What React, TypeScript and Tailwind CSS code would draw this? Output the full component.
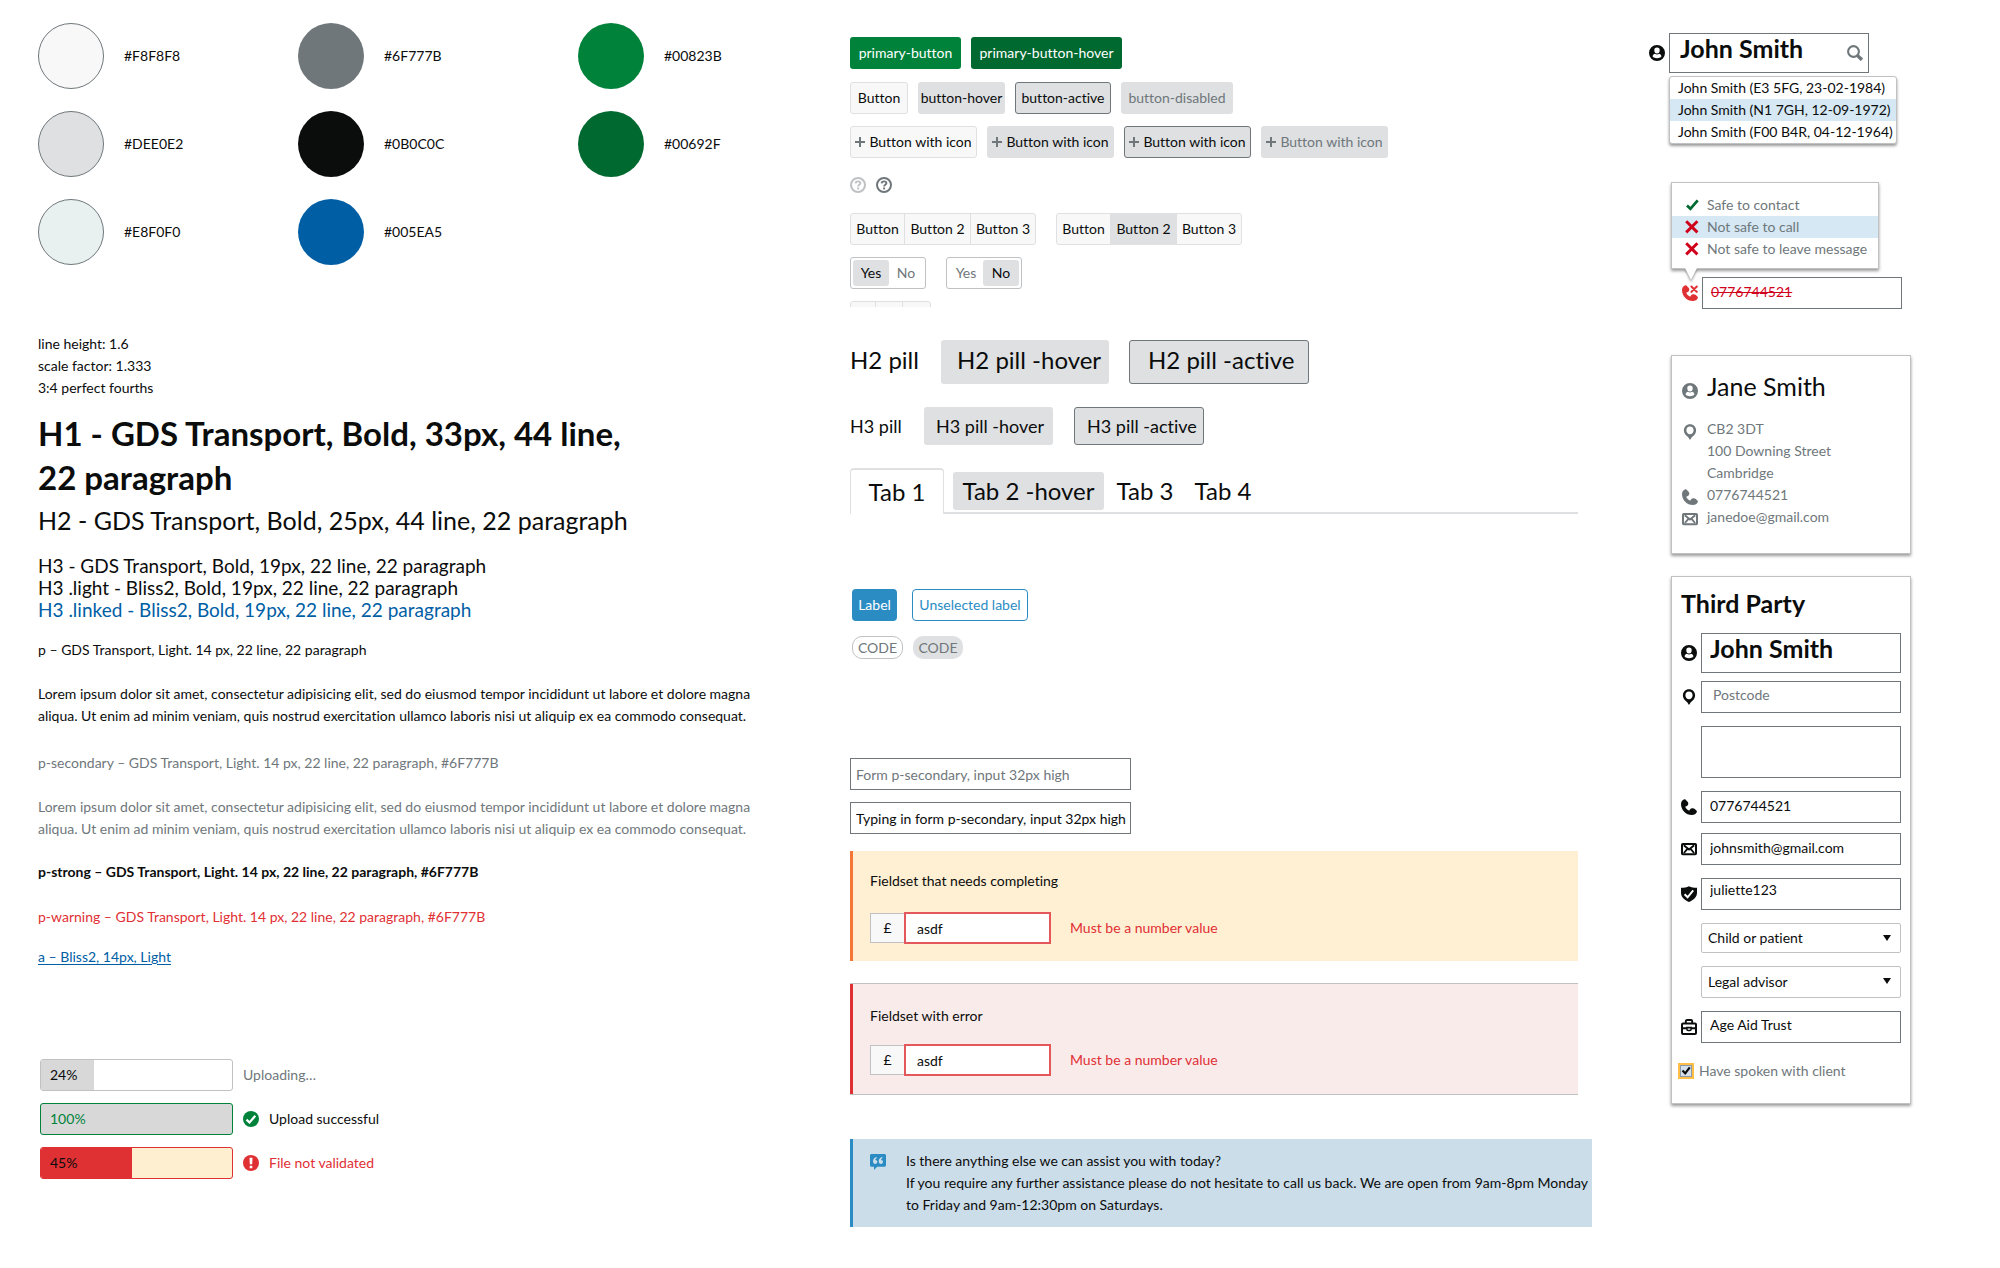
import type { ReactNode } from "react";

type IconProps = { className?: string };

const UserIcon = ({ className = "" }: IconProps) => (
  <svg viewBox="0 0 16 16" aria-hidden="true" className={`size-4 shrink-0 ${className}`}>
    <path
      fill="currentColor"
      fillRule="evenodd"
      d="M8 0a8 8 0 1 0 0 16A8 8 0 0 0 8 0Zm0 2.600a2.700 2.700 0 0 1 2.700 2.800c0 1.800-1.200 3.100-2.700 3.100S5.300 7.200 5.300 5.400A2.700 2.700 0 0 1 8 2.600ZM3.600 11.300c0-1.300 1-2.300 2.400-2.600.6.500 1.200.8 2 .8s1.400-.3 2-.8c1.400.3 2.400 1.300 2.400 2.600 0 1.100-2 1.900-4.400 1.900s-4.400-.8-4.400-1.900Z"
    />
  </svg>
);

const PinIcon = ({ className = "" }: IconProps) => (
  <svg viewBox="0 0 16 16" aria-hidden="true" className={`size-4 shrink-0 ${className}`}>
    <path
      fill="currentColor"
      fillRule="evenodd"
      d="M8 .2c3.500 0 6.100 2.700 6.100 6 0 2-.8 3.700-2.100 5L9.800 13.300 8 15.900l-1.800-2.600L4 11.200c-1.300-1.300-2.100-3-2.100-5C1.900 2.900 4.500.2 8 .2Zm0 2.300C5.700 2.500 4.400 4.100 4.400 6.200c0 2.200 1.400 4.100 3.600 4.100s3.600-1.900 3.600-4.100C11.600 4.100 10.300 2.500 8 2.500Z"
    />
  </svg>
);

const phonePath =
  "M3.400.3C1.300 1 0 2.700 0 5.200c0 5.700 5 10.800 10.800 10.800 2.500 0 4.300-1.200 5.100-3.300.1-.4 0-.7-.3-1l-2.100-1.900c-.8-.7-2.200-.8-3.200-.3-1 .4-1.700 1.200-2 2.300C6.500 11 5 9.500 4.200 7.700c1.400-.2 2.500-1 2.900-2.100.4-1 .2-2-.5-2.800L4.400.5C4.100.2 3.800.2 3.400.3Z";

const PhoneIcon = ({ className = "" }: IconProps) => (
  <svg viewBox="0 0 16 16" aria-hidden="true" className={`size-4 shrink-0 ${className}`}>
    <path fill="currentColor" d={phonePath} />
  </svg>
);

const PhoneBlockedIcon = () => (
  <svg viewBox="0 0 16 16" aria-hidden="true" className="size-4 shrink-0 text-[#df3034]">
    <path fill="currentColor" d={phonePath} />
    <path stroke="currentColor" strokeWidth="2" strokeLinecap="round" d="m9.400 1.500 5.400 5.400m0-5.400L9.400 6.900" />
  </svg>
);

const MailIcon = ({ className = "" }: IconProps) => (
  <svg viewBox="0 0 16 16" aria-hidden="true" fill="none" stroke="currentColor" className={`size-4 shrink-0 ${className}`}>
    <rect x="1" y="3" width="14" height="10.300" rx="0.800" strokeWidth="2" />
    <path strokeWidth="1.900" d="m2.800 4.300 5.200 4.300 5.200-4.300M2.900 12l3.300-3.800M13.100 12 9.800 8.200" />
  </svg>
);

const ShieldIcon = ({ className = "" }: IconProps) => (
  <svg viewBox="0 0 16 16" aria-hidden="true" className={`size-4 shrink-0 ${className}`}>
    <path fill="currentColor" d="M8 .2c2.200 1 4.800 1.500 8 1.500v5.100c0 4.200-3.300 7.400-8 9.100-4.700-1.700-8-4.900-8-9.100V1.700C3.200 1.700 5.800 1.200 8 .2Z" />
    <path fill="none" stroke="#fff" strokeWidth="2" d="m3.600 8.300 3 3 5.600-7" />
  </svg>
);

const BriefcaseIcon = ({ className = "" }: IconProps) => (
  <svg viewBox="0 0 16 16" aria-hidden="true" fill="none" stroke="currentColor" className={`size-4 shrink-0 ${className}`}>
    <rect x="1" y="4.500" width="14" height="10.500" rx="1" strokeWidth="2" />
    <path strokeWidth="1.900" d="M4.800 4V2.200c0-.7.5-1.200 1.200-1.200h4c.7 0 1.200.5 1.200 1.200V4M1 9.200h4.800m4.400 0H15" />
    <path strokeWidth="1.600" d="M5.900 8.600v1.600c0 .8.6 1.300 1.300 1.300h1.600c.7 0 1.300-.5 1.300-1.300V8.600Z" />
  </svg>
);

const SearchIcon = ({ className = "" }: IconProps) => (
  <svg viewBox="0 0 16 16" aria-hidden="true" fill="none" stroke="currentColor" className={`size-4 shrink-0 ${className}`}>
    <circle cx="6.500" cy="6.500" r="5.400" strokeWidth="2.100" />
    <path strokeWidth="3.400" d="m10.600 10.600 4.300 4.300" />
  </svg>
);

const TickIcon = ({ className = "" }: IconProps) => (
  <svg viewBox="0 0 14 14" aria-hidden="true" fill="none" stroke="currentColor" className={`size-3.5 shrink-0 ${className}`}>
    <path strokeWidth="2.700" d="m2 7.500 3.400 3.300L12.700 2.300" />
  </svg>
);

const CrossIcon = ({ className = "" }: IconProps) => (
  <svg viewBox="0 0 14 14" aria-hidden="true" stroke="currentColor" className={`size-3.5 shrink-0 ${className}`}>
    <path strokeWidth="2.900" d="m1.200 1.200 11.200 11.200m0-11.200L1.200 12.400" />
  </svg>
);

const PlusIcon = () => (
  <svg viewBox="0 0 10 10" aria-hidden="true" className="size-2.5 shrink-0 text-[#6f777b]">
    <path stroke="currentColor" strokeWidth="2" d="M5 0v10M0 5h10" />
  </svg>
);

const HelpIcon = ({ className = "" }: IconProps) => (
  <svg viewBox="0 0 16 16" aria-hidden="true" fill="none" stroke="currentColor" className={`size-4 shrink-0 ${className}`}>
    <circle cx="8" cy="8" r="7" strokeWidth="2" />
    <path strokeWidth="1.900" d="M5.600 6.400C5.700 5 6.600 4.400 8 4.400s2.400.7 2.400 1.800c0 1.500-2.300 1.600-2.300 3.200" />
    <path strokeWidth="2" d="M8.100 10.500v1.900" />
  </svg>
);

const SuccessIcon = () => (
  <svg viewBox="0 0 16 16" aria-hidden="true" className="size-4 shrink-0">
    <circle cx="8" cy="8" r="8" fill="#00823b" />
    <path fill="none" stroke="#fff" strokeWidth="2.200" d="m3.500 8.600 3 2.900 5.800-6.700" />
  </svg>
);

const ErrorIcon = () => (
  <svg viewBox="0 0 16 16" aria-hidden="true" className="size-4 shrink-0">
    <circle cx="8" cy="8" r="8" fill="#df3034" />
    <path fill="#fff" d="M6.500 2.700h3L9.200 9.300H6.800ZM6.700 10.800h2.600v2.400H6.700Z" />
  </svg>
);

const QuoteIcon = () => (
  <svg viewBox="0 0 16 16" aria-hidden="true" className="mt-1 size-4 shrink-0">
    <path fill="#2b8cc4" d="M1.500 0h13C15.300 0 16 .7 16 1.500v9.700c0 .8-.7 1.500-1.500 1.500H7.200L4 16v-3.300H1.500C.7 12.700 0 12 0 11.200V1.500C0 .7.700 0 1.500 0Z" />
    <path fill="#cbdde9" d="M6.700 3v1.200c-.9.300-1.300.9-1.400 1.700 1.200 0 2 .7 2 1.900S6.500 9.900 5.300 9.900C3.900 9.900 3 8.900 3 7.300 3 5 4.400 3.300 6.700 3ZM12.400 3v1.200c-.9.300-1.300.9-1.400 1.700 1.200 0 2 .7 2 1.900s-.8 2.100-2 2.100c-1.400 0-2.300-1-2.300-2.600 0-2.300 1.400-4 3.700-4.300Z" />
  </svg>
);

const swatches = [
  { hex: "#F8F8F8", fill: "bg-[#f8f8f8] border border-[#6f777b]" },
  { hex: "#6F777B", fill: "bg-[#6f777b]" },
  { hex: "#00823B", fill: "bg-[#00823b]" },
  { hex: "#DEE0E2", fill: "bg-[#dee0e2] border border-[#6f777b]" },
  { hex: "#0B0C0C", fill: "bg-[#0b0c0c]" },
  { hex: "#00692F", fill: "bg-[#00692f]" },
  { hex: "#E8F0F0", fill: "bg-[#e8f0f0] border border-[#6f777b]" },
  { hex: "#005EA5", fill: "bg-[#005ea5]" },
];

const lorem =
  "Lorem ipsum dolor sit amet, consectetur adipisicing elit, sed do eiusmod tempor incididunt ut labore et dolore magna aliqua. Ut enim ad minim veniam, quis nostrud exercitation ullamco laboris nisi ut aliquip ex ea commodo consequat.";

function Progress({ value, frame, fill, status }: { value: number; frame: string; fill: string; status: ReactNode }) {
  return (
    <div className="flex items-center gap-2.5">
      <div
        role="progressbar"
        aria-label="Upload progress"
        aria-valuenow={value}
        aria-valuemin={0}
        aria-valuemax={100}
        className={`h-8 w-[193px] overflow-hidden rounded-[3px] border ${frame}`}
      >
        <div className={`flex h-full items-center pl-[9px] ${fill}`}>{value}%</div>
      </div>
      {status}
    </div>
  );
}

function Foundations() {
  return (
    <section className="pt-[23px]">
      <ul className="grid grid-cols-[260px_280px_1fr] gap-y-[22px]">
        {swatches.map((s) => (
          <li key={s.hex} className="flex items-center gap-5">
            <span className={`size-[66px] rounded-full ${s.fill}`} />
            {s.hex}
          </li>
        ))}
      </ul>

      <div className="mt-[68px]">
        <p>line height: 1.6</p>
        <p>scale factor: 1.333</p>
        <p>3:4 perfect fourths</p>
      </div>
      <h1 className="mt-3 text-[33px] leading-[44px] font-bold">
        H1 - GDS Transport, Bold, 33px, 44 line,
        <br />
        22 paragraph
      </h1>
      <h2 className="text-[25px] leading-[42px]">H2 - GDS Transport, Bold, 25px, 44 line, 22 paragraph</h2>
      <div className="mt-[14px] text-[19px] leading-[22px]">
        <h3>H3 - GDS Transport, Bold, 19px, 22 line, 22 paragraph</h3>
        <h3>H3 .light - Bliss2, Bold, 19px, 22 line, 22 paragraph</h3>
        <h3 className="text-[#005ea5]">H3 .linked - Bliss2, Bold, 19px, 22 line, 22 paragraph</h3>
      </div>
      <p className="mt-[18px]">p – GDS Transport, Light. 14 px, 22 line, 22 paragraph</p>
      <p className="mt-[22px] max-w-[722px]">{lorem}</p>
      <p className="mt-[25px] text-[#6f777b]">p-secondary – GDS Transport, Light. 14 px, 22 line, 22 paragraph, #6F777B</p>
      <p className="mt-[22px] max-w-[722px] text-[#6f777b]">{lorem}</p>
      <p className="mt-[21px] font-bold">p-strong – GDS Transport, Light. 14 px, 22 line, 22 paragraph, #6F777B</p>
      <p className="mt-[23px] text-[#df3034]">p-warning – GDS Transport, Light. 14 px, 22 line, 22 paragraph, #6F777B</p>
      <p className="mt-[18px]">
        <a href="#link" className="text-[#005ea5] underline underline-offset-2">
          a – Bliss2, 14px, Light
        </a>
      </p>

      <div className="mt-[91px] ml-0.5 flex flex-col gap-3">
        <Progress
          value={24}
          frame="border-[#bfc1c3] bg-white"
          fill="w-[53px] bg-[#d8d8d8]"
          status={<span className="text-[#6f777b]">Uploading…</span>}
        />
        <Progress
          value={100}
          frame="border-[#00823b] bg-[#d8d8d8]"
          fill="w-full text-[#00823b]"
          status={
            <span className="flex items-center gap-2.5">
              <SuccessIcon />
              Upload successful
            </span>
          }
        />
        <Progress
          value={45}
          frame="border-[#df3034] bg-[#ffefd1]"
          fill="w-[91px] bg-[#df3034]"
          status={
            <span className="flex items-center gap-2.5 text-[#df3034]">
              <ErrorIcon />
              File not validated
            </span>
          }
        />
      </div>
    </section>
  );
}

const btn = "flex h-8 items-center justify-center whitespace-nowrap rounded-[3px]";

function ButtonGroup({ selected }: { selected?: boolean }) {
  return (
    <div className="flex overflow-hidden rounded-[3px] border border-[#dee0e2] bg-[#f8f8f8]">
      <button className="h-[30px] w-[54px] border-r border-[#dee0e2]">Button</button>
      <button className={selected ? "w-[66px] border-r border-[#dee0e2] bg-[#dee0e2]" : "w-[66px] border-r border-[#dee0e2]"}>
        Button 2
      </button>
      <button className="w-[64px]">Button 3</button>
    </div>
  );
}

function YesNo({ value, label }: { value: "Yes" | "No"; label: string }) {
  return (
    <div role="group" aria-label={label} className="flex h-8 items-center rounded-[3px] border border-[#bfc1c3] px-0.5">
      {["Yes", "No"].map((option) => (
        <button
          key={option}
          aria-pressed={option === value}
          className={
            option === value
              ? "h-[26px] w-9 rounded-[3px] bg-[#dee0e2]"
              : "h-[26px] w-[34px] rounded-[3px] text-[#6f777b]"
          }
        >
          {option}
        </button>
      ))}
    </div>
  );
}

function MoneyField({ id }: { id: string }) {
  return (
    <div className="flex items-center">
      <label htmlFor={id} className="flex h-[30px] w-[34px] items-center justify-center border border-r-0 border-[#bfc1c3] bg-[#f8f8f8]">
        £
      </label>
      <input id={id} defaultValue="asdf" className="h-8 w-[147px] border-2 border-[#e4585b] bg-white pl-[11px]" />
      <span className="ml-[19px] text-[#df3034]">Must be a number value</span>
    </div>
  );
}

function Components() {
  return (
    <section className="pt-[37px] pr-[70px]">
      <div className="flex gap-2.5">
        <button className={`${btn} w-[111px] bg-[#00823b] text-white`}>primary-button</button>
        <button className={`${btn} w-[151px] bg-[#00692f] text-white`}>primary-button-hover</button>
      </div>
      <div className="mt-[13px] flex gap-2.5">
        <button className={`${btn} w-[58px] border border-[#dee0e2] bg-[#f8f8f8]`}>Button</button>
        <button className={`${btn} w-[87px] bg-[#dee0e2]`}>button-hover</button>
        <button className={`${btn} w-24 border border-[#6f777b] bg-[#dee0e2]`}>button-active</button>
        <button disabled className={`${btn} w-28 bg-[#dee0e2] text-[#6f777b]`}>
          button-disabled
        </button>
      </div>
      <div className="mt-3 flex gap-2.5">
        <button className={`${btn} w-[127px] gap-1 border border-[#dee0e2] bg-[#f8f8f8]`}>
          <PlusIcon />
          Button with icon
        </button>
        <button className={`${btn} w-[127px] gap-1 bg-[#dee0e2]`}>
          <PlusIcon />
          Button with icon
        </button>
        <button className={`${btn} w-[127px] gap-1 border border-[#6f777b] bg-[#dee0e2]`}>
          <PlusIcon />
          Button with icon
        </button>
        <button disabled className={`${btn} w-[127px] gap-1 bg-[#dee0e2] text-[#6f777b]`}>
          <PlusIcon />
          Button with icon
        </button>
      </div>
      <div className="mt-[19px] flex gap-2.5">
        <button aria-label="Help">
          <HelpIcon className="text-[#bfc1c3]" />
        </button>
        <button aria-label="Help, hovered">
          <HelpIcon className="text-[#6f777b]" />
        </button>
      </div>
      <div className="mt-5 flex gap-5">
        <ButtonGroup />
        <ButtonGroup selected />
      </div>
      <div className="mt-3 flex gap-5">
        <YesNo value="Yes" label="First choice" />
        <YesNo value="No" label="Second choice" />
      </div>
      <div className="mt-3 h-1.5 overflow-hidden">
        <div className="flex h-8 w-[81px] rounded-[3px] border border-[#dee0e2] bg-[#f8f8f8]">
          <span className="w-[25px] border-r border-[#dee0e2]" />
          <span className="w-[27px] border-r border-[#dee0e2]" />
        </div>
      </div>

      <div className="mt-[33px] flex items-center text-[24px] whitespace-nowrap">
        <h2 className="w-[91px] pb-1">H2 pill</h2>
        <h2 className="flex h-11 w-[168px] items-center rounded-[3px] bg-[#dee0e2] pb-1 pl-4">H2 pill -hover</h2>
        <h2 className="ml-5 flex h-11 w-[180px] items-center rounded-[3px] border border-[#6f777b] bg-[#dee0e2] pb-1 pl-[18px]">
          H2 pill -active
        </h2>
      </div>
      <div className="mt-[23px] flex items-center text-[18px] whitespace-nowrap">
        <h3 className="w-[74px]">H3 pill</h3>
        <h3 className="flex h-[38px] w-[129px] items-center rounded-[3px] bg-[#dee0e2] pl-3">H3 pill -hover</h3>
        <h3 className="ml-[21px] flex h-[38px] w-[130px] items-center rounded-[3px] border border-[#6f777b] bg-[#dee0e2] pl-3">
          H3 pill -active
        </h3>
      </div>

      <div role="tablist" aria-label="Sections" className="mt-[23px] flex h-[46px] text-[24px] whitespace-nowrap">
        <button role="tab" aria-selected="true" className="w-[94px] rounded-t-[4px] border-x border-t-2 border-[#dee0e2]">
          Tab 1
        </button>
        <div className="flex flex-1 items-start border-b-2 border-[#dee0e2] pt-1">
          <button role="tab" aria-selected="false" className="ml-[9px] h-[38px] w-[151px] rounded-[3px] bg-[#dee0e2]">
            Tab 2 -hover
          </button>
          <button role="tab" aria-selected="false" className="ml-2.5 h-[38px] w-[62px]">
            Tab 3
          </button>
          <button role="tab" aria-selected="false" className="ml-4 h-[38px] w-[62px]">
            Tab 4
          </button>
        </div>
      </div>

      <div className="mt-[75px] ml-0.5 flex gap-[15px]">
        <span className="flex h-8 w-[45px] items-center justify-center rounded-[4px] bg-[#2b8cc4] text-white">Label</span>
        <span className="flex h-8 w-[116px] items-center justify-center rounded-[4px] border border-[#2b8cc4] text-[#2b8cc4]">
          Unselected label
        </span>
      </div>
      <div className="mt-[15px] ml-0.5 flex gap-2.5 text-[#6f777b]">
        <span className="flex h-[23px] w-[51px] items-center justify-center rounded-[10px] border border-[#bfc1c3]">CODE</span>
        <span className="flex h-[23px] w-[50px] items-center justify-center rounded-[10px] bg-[#dee0e2]">CODE</span>
      </div>

      <div className="mt-[99px] flex flex-col gap-3">
        <input
          aria-label="Empty field"
          placeholder="Form p-secondary, input 32px high"
          className="h-8 w-[281px] border border-[#6f777b] pl-[5px] placeholder:text-[#6f777b]"
        />
        <input
          aria-label="Filled field"
          defaultValue="Typing in form p-secondary, input 32px high"
          className="h-8 w-[281px] border border-[#6f777b] pl-[5px]"
        />
      </div>

      <fieldset className="mt-[17px] flex flex-col border-l-[3px] border-[#f47738] bg-[#ffefd3] pt-[19px] pb-[17px] pl-[17px]">
        <legend className="float-left">Fieldset that needs completing</legend>
        <div className="mt-5">
          <MoneyField id="amount-needed" />
        </div>
      </fieldset>
      <div className="mt-[22px] border-y border-[#bfc1c3]">
        <fieldset className="flex flex-col border-l-[3px] border-[#df3034] bg-[#faebeb] pt-[21px] pb-[18px] pl-[17px]">
          <legend className="float-left">Fieldset with error</legend>
          <div className="mt-[17px]">
            <MoneyField id="amount-error" />
          </div>
        </fieldset>
      </div>

      <aside className="mt-11 -mr-3.5 flex gap-5 border-l-[3px] border-[#2b8cc4] bg-[#cbdde9] py-[11px] pl-[17px]">
        <QuoteIcon />
        <div className="whitespace-nowrap">
          <p>Is there anything else we can assist you with today?</p>
          <p>
            If you require any further assistance please do not hesitate to call us back. We are open from 9am-8pm Monday
            <br />
            to Friday and 9am-12:30pm on Saturdays.
          </p>
        </div>
      </aside>
    </section>
  );
}

const card = "border border-[#bfc1c3] bg-white shadow-[0_2px_3px_rgba(0,0,0,0.4)]";
const field = "w-[200px] border border-[#6f777b] bg-white";

function Row({ icon, children }: { icon?: ReactNode; children: ReactNode }) {
  return (
    <div className="flex items-center gap-1">
      <span className="size-4 shrink-0">{icon}</span>
      {children}
    </div>
  );
}

function Select({ label, value, size }: { label: string; value: string; size: string }) {
  return (
    <div className="relative">
      <select aria-label={label} className={`w-[200px] appearance-none rounded-[2px] border border-[#bfc1c3] bg-white pl-1.5 ${size}`}>
        <option>{value}</option>
      </select>
      <svg viewBox="0 0 8 6" aria-hidden="true" className="pointer-events-none absolute top-3 right-2.5 h-1.5 w-2">
        <path d="M0 0h8L4 6Z" fill="#0b0c0c" />
      </svg>
    </div>
  );
}

function People() {
  const muted = "text-[#6f777b]";
  return (
    <section className="pt-[33px]">
      <div className="ml-px flex items-center gap-1">
        <UserIcon />
        <div className="relative">
          <input aria-label="Search people" defaultValue="John Smith" className={`${field} h-10 pb-2.5 pl-2.5 text-[25px] font-bold`} />
          <button aria-label="Search" className="absolute top-3 right-1.5 text-[#6f777b]">
            <SearchIcon />
          </button>
        </div>
      </div>
      <ul className={`mt-[3px] ml-[21px] w-[228px] rounded-[3px] ${card}`}>
        <li className="pl-2">John Smith (E3 5FG, 23-02-1984)</li>
        <li className="bg-[#d5e8f3] pl-2">John Smith (N1 7GH, 12-09-1972)</li>
        <li className="pl-2">John Smith (F00 B4R, 04-12-1964)</li>
      </ul>

      <div className={`relative mt-[38px] ml-[23px] w-[208px] pt-[11px] pb-2 ${card} ${muted}`}>
        <ul>
          <li className="flex items-center gap-2 pl-[13px]">
            <TickIcon className="text-[#00692f]" />
            Safe to contact
          </li>
          <li className="flex items-center gap-2 bg-[#d5e8f3] pl-[13px]">
            <CrossIcon className="text-[#d0021b]" />
            Not safe to call
          </li>
          <li className="flex items-center gap-2 pl-[13px]">
            <CrossIcon className="text-[#d0021b]" />
            Not safe to leave message
          </li>
        </ul>
        <svg viewBox="0 0 14 14" aria-hidden="true" className="absolute top-full left-3 size-3.5 drop-shadow-[0_2px_1px_rgba(0,0,0,0.4)]">
          <path d="M1 0h12L7 12Z" fill="#fff" />
        </svg>
      </div>
      <div className="mt-2 ml-[34px]">
        <Row icon={<PhoneBlockedIcon />}>
          <input
            aria-label="Phone, not safe to call"
            defaultValue="0776744521"
            className={`${field} h-8 pb-1 pl-2 text-[#d0021b] line-through`}
          />
        </Row>
      </div>

      <article className={`mt-[46px] ml-[23px] w-60 pt-[9px] pb-[25px] pl-2.5 ${card} ${muted}`}>
        <div className="flex items-center gap-[9px]">
          <UserIcon className="mt-2.5" />
          <h2 className="text-[25px] leading-[42px] text-[#0b0c0c]">Jane Smith</h2>
        </div>
        <address className="mt-[11px] not-italic">
          <div className="flex gap-[9px]">
            <PinIcon className="mt-1.5" />
            <p>
              CB2 3DT
              <br />
              100 Downing Street
              <br />
              Cambridge
            </p>
          </div>
          <p className="flex items-center gap-[9px]">
            <PhoneIcon className="mt-1" />
            0776744521
          </p>
          <p className="flex items-center gap-[9px]">
            <MailIcon className="mt-1" />
            janedoe@gmail.com
          </p>
        </address>
      </article>

      <form className={`mt-[22px] ml-[23px] w-60 pt-[11px] pb-[21px] pl-[9px] ${card}`}>
        <h2 className="text-[25px] leading-[30px] font-bold">Third Party</h2>
        <div className="mt-[15px]">
          <Row icon={<UserIcon />}>
            <input aria-label="Name" defaultValue="John Smith" className={`${field} h-10 pb-2.5 pl-2 text-[25px] font-bold`} />
          </Row>
        </div>
        <div className="mt-2 flex flex-col gap-[13px]">
          <Row icon={<PinIcon />}>
            <input aria-label="Postcode" placeholder="Postcode" className={`${field} h-8 pb-1.5 pl-[11px] placeholder:text-[#6f777b]`} />
          </Row>
          <Row>
            <textarea aria-label="Address" className={`${field} h-[52px] resize-none`} />
          </Row>
        </div>
        <div className="mt-[13px] flex flex-col gap-2.5">
          <Row icon={<PhoneIcon />}>
            <input aria-label="Phone" defaultValue="0776744521" className={`${field} h-8 pb-1 pl-2`} />
          </Row>
          <Row icon={<MailIcon />}>
            <input aria-label="Email" defaultValue="johnsmith@gmail.com" className={`${field} h-8 pb-1 pl-2`} />
          </Row>
        </div>
        <div className="mt-[13px] flex flex-col gap-[13px]">
          <Row icon={<ShieldIcon />}>
            <input aria-label="Passphrase" defaultValue="juliette123" className={`${field} h-8 pb-2.5 pl-2`} />
          </Row>
          <Row>
            <Select label="Relationship" value="Child or patient" size="h-[30px]" />
          </Row>
          <Row>
            <Select label="Role" value="Legal advisor" size="h-8" />
          </Row>
          <Row icon={<BriefcaseIcon />}>
            <input aria-label="Organisation" defaultValue="Age Aid Trust" className={`${field} h-8 pb-1.5 pl-2`} />
          </Row>
        </div>
        <label className={`relative mt-[17px] flex items-center gap-[5px] ${muted}`}>
          <input
            type="checkbox"
            defaultChecked
            className="-ml-[3px] size-4 appearance-none border-2 border-[#ffbf47] bg-[#d3dfec] inset-ring inset-ring-[#8d99a6]"
          />
          <svg
            viewBox="0 0 16 16"
            aria-hidden="true"
            fill="none"
            stroke="#0b0c0c"
            className="pointer-events-none absolute top-[3px] -left-[3px] size-4"
          >
            <path strokeWidth="2.200" d="m4.500 7.600 2.700 2.800 4.600-6" />
          </svg>
          Have spoken with client
        </label>
      </form>
    </section>
  );
}

export default function App() {
  return (
    <main className="grid min-h-screen grid-cols-[minmax(0,812fr)_minmax(0,798fr)_minmax(0,352fr)] bg-white pl-[38px] font-[Lato,'Noto_Sans',sans-serif] text-[14px] leading-[22px] text-[#0b0c0c] [font-variant-ligatures:none]">
      <Foundations />
      <Components />
      <People />
    </main>
  );
}
